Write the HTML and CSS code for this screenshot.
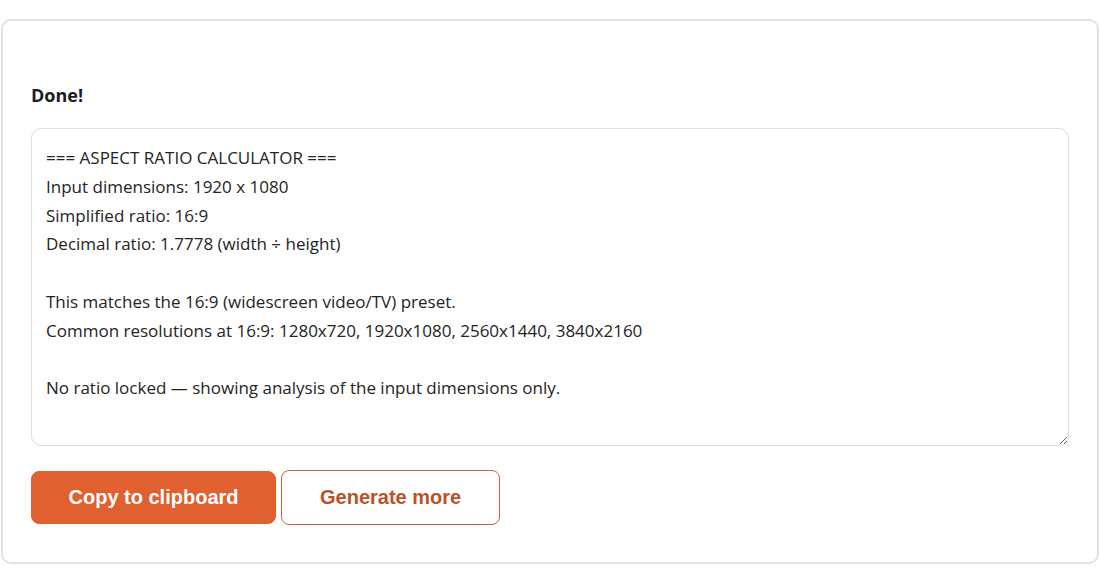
FILE: index.html
```html
<!DOCTYPE html>
<html lang="en">
<head>
<meta charset="utf-8">
<title>Aspect Ratio Calculator</title>
<link rel="stylesheet" href="styles.css">
</head>
<body>
<div class="card">
  <h3 class="title">Done!</h3>
  <textarea class="output" readonly>=== ASPECT RATIO CALCULATOR ===
Input dimensions: 1920 x 1080
Simplified ratio: 16:9
Decimal ratio: 1.7778 (width ÷ height)

This matches the 16:9 (widescreen video/TV) preset.
Common resolutions at 16:9: 1280x720, 1920x1080, 2560x1440, 3840x2160

No ratio locked — showing analysis of the input dimensions only.</textarea>
  <div class="actions">
    <button class="btn btn-primary">Copy to clipboard</button>
    <button class="btn btn-outline">Generate more</button>
  </div>
</div>
</body>
</html>
```

FILE: styles.css
```css
html, body {
  margin: 0;
  background: #ffffff;
}
body {
  padding: 19px 1px 0 1px;
  font-family: "Open Sans", "Noto Sans", sans-serif;
}
.card {
  border: 2px solid #e2e2e2;
  border-radius: 10px;
  padding: 62px 28px 37px 28px;
  background: #fff;
}
.title {
  margin: 0 0 21px 0;
  font-size: 18px;
  line-height: 24px;
  font-weight: 700;
  color: #1c1c1c;
}
.output {
  display: block;
  box-sizing: border-box;
  width: 100%;
  height: 318px;
  margin: 0;
  padding: 15px 14px;
  border: 1px solid #dedede;
  border-radius: 10px;
  font-family: "Open Sans", "Noto Sans", sans-serif;
  font-size: 17px;
  line-height: 28.8px;
  color: #242424;
  background: #fff;
  resize: vertical;
  outline: none;
}
.actions {
  display: flex;
  gap: 5px;
  margin-top: 24px;
  align-items: center;
}
.btn {
  box-sizing: border-box;
  height: 53px;
  border-radius: 8px;
  font-family: "Liberation Sans", Arial, sans-serif;
  font-size: 20px;
  font-weight: 700;
  cursor: pointer;
}
.btn-primary {
  padding: 0 36.5px;
  background: #e0602f;
  color: #ffffff;
  border: 1px solid #e0602f;
}
.btn-outline {
  height: 55px;
  padding: 0 38px;
  background: #ffffff;
  color: #b9532a;
  border: 1px solid #c4673f;
}
```
